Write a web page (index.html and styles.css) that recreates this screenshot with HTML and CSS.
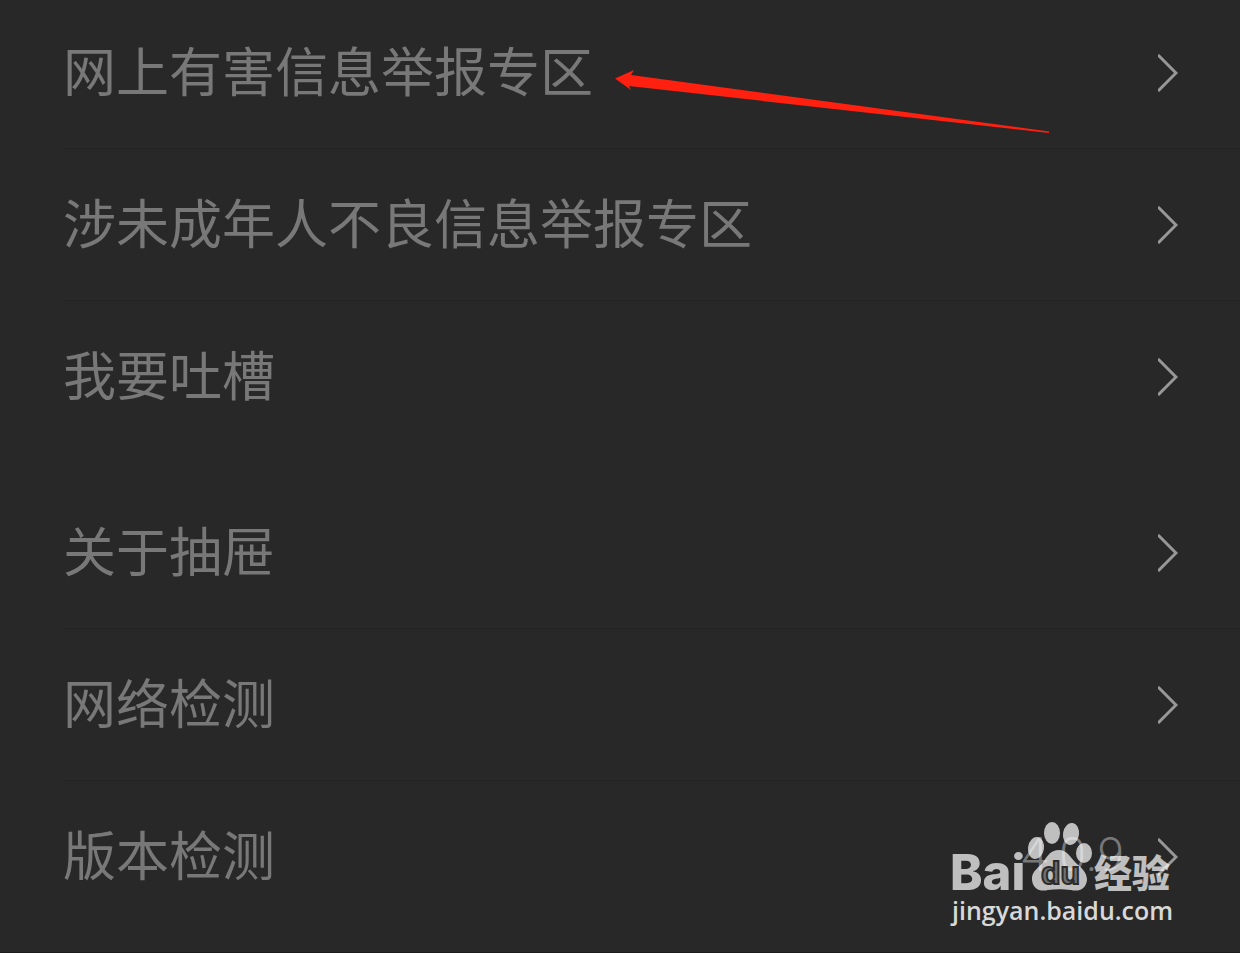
FILE: index.html
```
<!DOCTYPE html>
<html lang="zh-CN">
<head>
    <meta charset="UTF-8">
    <meta name="viewport" content="width=device-width, initial-scale=1.0">
    <title>设置</title>
    <link rel="stylesheet" href="styles.css">
</head>
<body>
    <main class="settings">
        <nav class="group">
            <a class="row" href="#report">
                <span class="label">网上有害信息举报专区</span>
                <svg class="chevron" viewBox="0 0 20 38"><path d="M0 1 L18 19 L0 37"/></svg>
            </a>
            <a class="row" href="#minors">
                <span class="label">涉未成年人不良信息举报专区</span>
                <svg class="chevron" viewBox="0 0 20 38"><path d="M0 1 L18 19 L0 37"/></svg>
            </a>
            <a class="row" href="#feedback">
                <span class="label">我要吐槽</span>
                <svg class="chevron" viewBox="0 0 20 38"><path d="M0 1 L18 19 L0 37"/></svg>
            </a>
        </nav>
        <nav class="group">
            <a class="row" href="#about">
                <span class="label">关于抽屉</span>
                <svg class="chevron" viewBox="0 0 20 38"><path d="M0 1 L18 19 L0 37"/></svg>
            </a>
            <a class="row" href="#network">
                <span class="label">网络检测</span>
                <svg class="chevron" viewBox="0 0 20 38"><path d="M0 1 L18 19 L0 37"/></svg>
            </a>
            <a class="row" href="#version">
                <span class="label">版本检测</span>
                <span class="version">4.0.9</span>
                <svg class="chevron" viewBox="0 0 20 38"><path d="M0 1 L18 19 L0 37"/></svg>
            </a>
        </nav>

        <!-- red pointer over the first row -->
        <svg class="pointer" viewBox="0 0 436 64">
            <path d="M1 8.5 L20 0 L17 5 L435 61.5 L435 63 L15 16 L17 20 Z"/>
        </svg>

        <svg class="watermark" viewBox="0 0 230 110">
            <g class="mark">
                <text class="latin" x="0" y="70">Bai</text>
                <ellipse cx="86" cy="28" rx="8" ry="11" transform="rotate(8 86 28)"/>
                <ellipse cx="102" cy="13" rx="8" ry="11"/>
                <ellipse cx="121" cy="14" rx="8" ry="11" transform="rotate(8 121 14)"/>
                <ellipse cx="134" cy="33" rx="8" ry="10"/>
                <path d="M109 30 C117 30 120 37 126 43 C132 48 137 53 137 60 C136 69 129 72 121 70 C112 69 106 69 98 70 C90 72 83 69 82 60 C81 51 90 47 94 41 C98 35 101 30 109 30 Z"/>
                <text class="hanzi" x="144" y="67">经验</text>
            </g>
            <text class="du" x="91" y="64">du</text>
            <text class="site" x="2" y="100">jingyan.baidu.com</text>
        </svg>
    </main>
</body>
</html>
```

FILE: styles.css
```
body {
    margin: 0;
    background: #282828;
    color: #787878;
    font-family: "Noto Sans CJK SC", "Noto Sans", sans-serif;
}

.settings {
    position: relative;
    box-sizing: border-box;
    min-height: 100vh;
    overflow: hidden;
    border-bottom: 1px solid #1c1c1c;
}

/* the list is scrolled a little past its first row */
.group:first-child {
    margin-top: -3px;
}

.group + .group {
    margin-top: 24px;
}

.row {
    display: flex;
    align-items: center;
    box-sizing: border-box;
    height: 152px;
    margin-left: 63px;
    padding-right: 62px;
    border-bottom: 1px solid #222;
    color: inherit;
    text-decoration: none;
}

.row:last-child {
    border-bottom-color: transparent;
}

.label {
    flex: 1;
    padding-bottom: 8px;
    font-size: 53px;
    font-weight: 400;
    line-height: 76px;
}

.version {
    margin-right: 34px;
    padding-bottom: 4px;
    font-family: Roboto, sans-serif;
    font-size: 48px;
    font-weight: 300;
}

.chevron {
    width: 20px;
    height: 38px;
    fill: none;
    stroke: #989898;
    stroke-width: 3;
}

.pointer {
    position: absolute;
    top: 70px;
    left: 614px;
    width: 436px;
    height: 64px;
    fill: #ff2010;
}

.watermark {
    position: absolute;
    right: 60px;
    bottom: 22px;
    width: 230px;
    height: 110px;
}

.mark {
    fill: #fff;
    opacity: 0.7;
}

.latin {
    font: 800 49px Inter, sans-serif;
}

.hanzi {
    font: 900 38px "Noto Sans CJK SC", sans-serif;
}

.du {
    font: bold 32px "Liberation Sans", sans-serif;
    fill: #707070;
    stroke: #2c2c2c;
    stroke-width: 2;
}

.site {
    font: 600 25px "Open Sans", sans-serif;
    fill: #d8d8d8;
}
```
